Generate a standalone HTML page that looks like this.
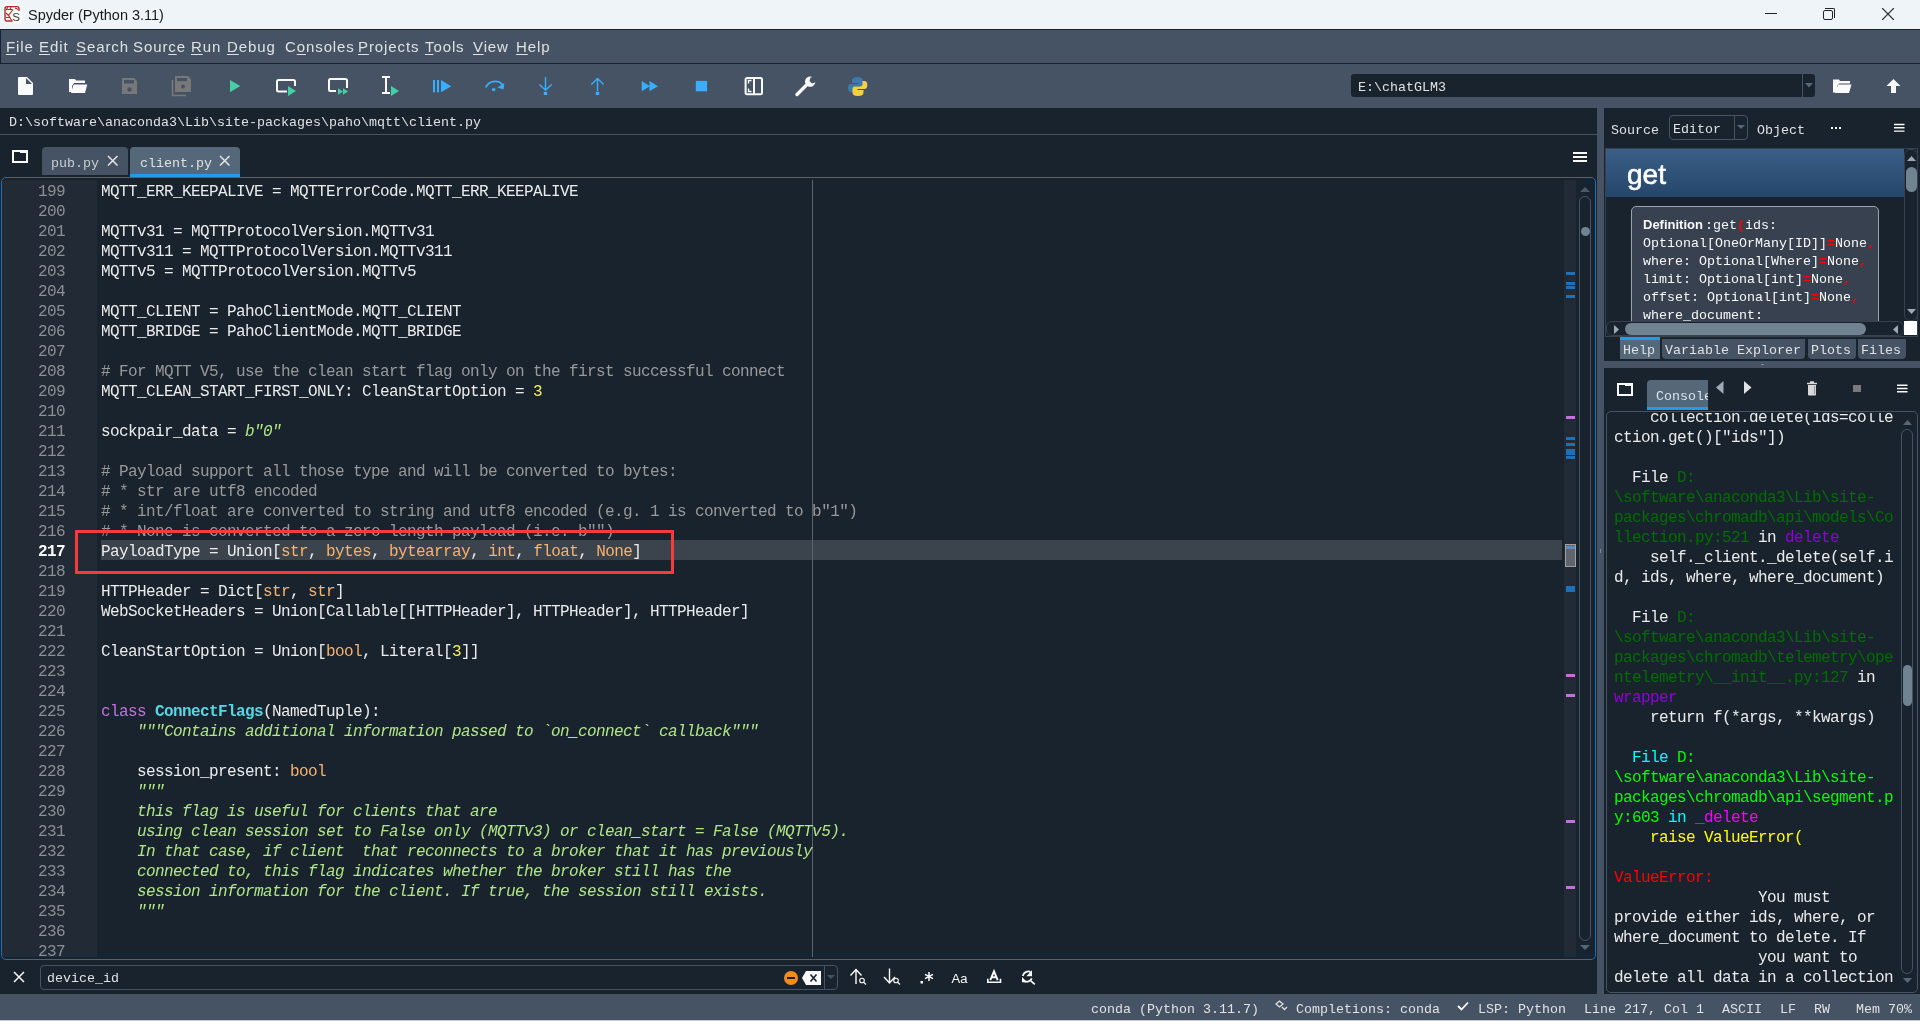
<!DOCTYPE html>
<html><head><meta charset="utf-8">
<style>
*{margin:0;padding:0;box-sizing:border-box}
html,body{width:1920px;height:1021px;overflow:hidden;background:#19232D;font-family:"Liberation Sans",sans-serif;position:relative}
.a{position:absolute}
.code,.mono,.mi,#title .t,.gt{will-change:transform}
#title{left:0;top:0;width:1920px;height:29px;background:#eff4f9}
#title .t{left:28px;top:7px;font-size:14.5px;color:#1a1a1a;white-space:nowrap}
#menubar{left:0;top:29px;width:1920px;height:35px;background:#455364;border-top:1px solid #19232D;border-bottom:1px solid #19232D;border-left:1px solid #19232D}
.mi{top:8px;font-size:15px;letter-spacing:0.9px;color:#E0E1E3;white-space:nowrap}
.mi u{text-decoration:underline;text-underline-offset:2px}
#toolbar{left:0;top:64px;width:1920px;height:44px;background:#455364}
.mono{font-family:"Liberation Mono",monospace}
.code{font-family:"Liberation Mono",monospace;font-size:16px;letter-spacing:-0.6px;line-height:20px;white-space:pre;color:#ebebeb}
.ln{color:#8a8f94}
.cm{color:#999999}
.kw{color:#c670e0}
.bi{color:#fab16c}
.df{color:#57d6e4;font-weight:bold}
.st{color:#b0e686;font-style:italic}
.nu{color:#faed5c}
.dg{color:#006e00}.dm{color:#9000e0}.bc{color:#00ffff}.bg{color:#00ff00}.bm{color:#ff00ff}.by{color:#ffff00}.br{color:#ff0000}
</style></head><body>
<!-- title bar -->
<div id="title" class="a">
  <svg class="a" style="left:2px;top:4px" width="20" height="20" viewBox="2 4 20 20">
    <rect x="2.5" y="4.2" width="19.2" height="19.3" rx="3" fill="#fbfbfb"/>
    <path d="M12.5 21H7Q5 21 5 19V8.5Q5 6.6 7 6.6H17Q19 6.6 19 8.5V11" stroke="#b52a2a" stroke-width="1.4" fill="none"/>
    <path d="M5.5 9.5L12.5 9.5M13 9.5L8.5 15.5L12 21M6 13L8.5 15.5M5.5 17.5L10.5 17.5M7.5 7L6.5 10M11 7L10 9.5M15 8L18.5 9.5" stroke="#b52a2a" stroke-width="1.1" fill="none"/>
    <text x="12.3" y="21" font-size="11.5" font-family="Liberation Sans" fill="#3a3a3a">S</text>
  </svg>
  <div class="a t">Spyder (Python 3.11)</div>
  <div class="a" style="left:1765px;top:13px;width:12px;height:1px;background:#222"></div>
  <div class="a" style="left:1823px;top:10px;width:10px;height:10px;border:1.2px solid #222;border-radius:2px"></div>
  <div class="a" style="left:1825px;top:8px;width:10px;height:10px;border-top:1.2px solid #222;border-right:1.2px solid #222;border-radius:0 2px 0 0"></div>
  <svg class="a" style="left:1882px;top:8px" width="12" height="12"><path d="M0 0L12 12M12 0L0 12" stroke="#222" stroke-width="1.2"/></svg>
</div>
<!-- menu bar -->
<div id="menubar" class="a">
  <div class="a mi" style="left:5px"><u>F</u>ile</div>
  <div class="a mi" style="left:37.5px"><u>E</u>dit</div>
  <div class="a mi" style="left:75px"><u>S</u>earch</div>
  <div class="a mi" style="left:132px">Sour<u>c</u>e</div>
  <div class="a mi" style="left:190px"><u>R</u>un</div>
  <div class="a mi" style="left:226px"><u>D</u>ebug</div>
  <div class="a mi" style="left:284px">C<u>o</u>nsoles</div>
  <div class="a mi" style="left:357px"><u>P</u>rojects</div>
  <div class="a mi" style="left:424px"><u>T</u>ools</div>
  <div class="a mi" style="left:472px"><u>V</u>iew</div>
  <div class="a mi" style="left:515px"><u>H</u>elp</div>
</div>
<!-- toolbar -->
<div id="toolbar" class="a"></div>
<svg class="a" style="left:0;top:64px" width="900" height="44" viewBox="0 64 900 44">
  <!-- new file -->
  <path d="M19 77 H27 L33 83 V94 Q33 95 32 95 H19 Q18 95 18 94 V78 Q18 77 19 77 Z" fill="#fafafa"/>
  <path d="M26 78 L26 84 L32 84 Z" fill="#455364"/>
  <!-- open folder -->
  <path d="M69 79 H75 L76 80.5 H85 V83 H74 L72 86 V92 H69 Z" fill="#fafafa"/>
  <path d="M71 93 L73.5 84.5 H87.3 L85 93 Z" fill="#fafafa"/>
  <!-- save (disabled) -->
  <path d="M122 78 H134 L137 81 V94 H122 Z" fill="#787878"/>
  <rect x="124" y="80" width="10" height="3.5" fill="#455364"/>
  <circle cx="129.5" cy="89.5" r="2.2" fill="#455364"/>
  <!-- save all (disabled) -->
  <path d="M175 76 H188 L191 79 V92 H175 Z" fill="#787878"/>
  <rect x="177" y="78" width="10" height="3.2" fill="#455364"/>
  <circle cx="183" cy="86.5" r="2" fill="#455364"/>
  <path d="M172.5 80 V95.5 H186" stroke="#787878" stroke-width="1.6" fill="none"/>
  <!-- run -->
  <path d="M230 80 L240.3 86 L230 92.3 Z" fill="#45d0a4"/>
  <!-- run cell -->
  <path d="M287 91.5 H278.5 Q277 91.5 277 90 V81.5 Q277 80 278.5 80 H293.5 Q295 80 295 81.5 V86" stroke="#fafafa" stroke-width="2" fill="none"/>
  <path d="M288 86 L296 91 L288 96 Z" fill="#45d0a4"/>
  <!-- run cell and advance -->
  <path d="M336 91 H330 Q329 91 329 89.5 V80.5 Q329 79 330.5 79 H345.5 Q347 79 347 80.5 V88" stroke="#fafafa" stroke-width="2" fill="none"/>
  <path d="M338 88.3 L343 91.5 L338 94.7 Z M343 88.3 L348 91.5 L343 94.7 Z" fill="#45d0a4"/>
  <!-- run selection -->
  <path d="M382 77 H390 M382 93 H390 M386 77 V93" stroke="#fafafa" stroke-width="2" fill="none"/>
  <path d="M391 86 L399 91 L391 96 Z" fill="#45d0a4"/>
  <!-- debug -->
  <rect x="433" y="80" width="2" height="12.3" fill="#37aefe"/>
  <rect x="437" y="80" width="2" height="12.3" fill="#37aefe"/>
  <path d="M441 80 L451.3 86.2 L441 92.3 Z" fill="#37aefe"/>
  <!-- step over -->
  <path d="M485.8 87.5 Q488 82 494.5 81.3 Q500.5 81 503 85.5" stroke="#37aefe" stroke-width="1.8" fill="none"/>
  <path d="M504.3 83 L503.5 89.5 L497.5 87.5 Z" fill="#37aefe"/>
  <rect x="492" y="88.3" width="3.3" height="2.6" fill="#37aefe"/>
  <!-- step into -->
  <path d="M545.5 77 V90 M539.3 84.5 L545.5 90 L551.7 84.5" stroke="#37aefe" stroke-width="1.4" fill="none"/>
  <rect x="543.8" y="91.8" width="3.4" height="3.2" fill="#37aefe"/>
  <!-- step return -->
  <path d="M597.5 78.5 V91 M591.3 84.5 L597.5 78.5 L603.7 84.5" stroke="#37aefe" stroke-width="1.4" fill="none"/>
  <rect x="595.8" y="91.8" width="3.4" height="3.2" fill="#37aefe"/>
  <!-- continue -->
  <path d="M641.7 81 L650 86.2 L641.7 91.3 Z M649.5 81 L658 86.2 L649.5 91.3 Z" fill="#37aefe"/>
  <!-- stop -->
  <rect x="695.8" y="80.9" width="11.3" height="10.4" fill="#37aefe"/>
  <!-- maximize -->
  <rect x="745.6" y="78" width="16.4" height="16.2" rx="1.5" stroke="#fafafa" stroke-width="2" fill="none"/>
  <path d="M754 78 V94" stroke="#fafafa" stroke-width="2"/>
  <path d="M751.5 80.5 H748.5 V83.5 M748.5 88.5 V91.5 H751.5" stroke="#fafafa" stroke-width="1.4" fill="none"/>
  <!-- wrench -->
  <path d="M797 94.5 L806 85.5" stroke="#fafafa" stroke-width="3.4" stroke-linecap="round"/>
  <path d="M812.5 77 A5.2 5.2 0 1 0 815.3 82.3 L812 83.5 L809.5 81 L810.5 77.6 Z" fill="#fafafa"/>
  <!-- python -->
  <path d="M857.5 77 Q852 77 852 80.5 V83 H858 V84 H851 Q848 84 848 88 Q848 92 851 92 H853 V89 Q853 86.5 856 86.5 H860.5 Q863 86.5 863 84 V80.5 Q863 77 857.5 77 Z" fill="#3f78aa"/>
  <path d="M858 96 Q863.5 96 863.5 92.5 V90 H857.5 V89 H864.5 Q867.3 89 867.3 85 Q867.3 81 864.5 81 H862.5 V84 Q862.5 86.5 859.5 86.5 H855 Q852.5 86.5 852.5 89 V92.5 Q852.5 96 858 96 Z" fill="#f5cf45"/>
</svg>
<!-- working dir combo -->
<div class="a" style="left:1351px;top:74px;width:464px;height:23px;background:#19232D;border-radius:3px"></div>
<div class="a" style="left:1802px;top:74px;width:1px;height:23px;background:#455364"></div>
<svg class="a" style="left:1805px;top:83px" width="8" height="5"><path d="M0 0H8L4 4.5Z" fill="#54687A"/></svg>
<div class="a mono" style="left:1358px;top:80px;font-size:13.33px;color:#E0E1E3;white-space:pre">E:\chatGLM3</div>
<svg class="a" style="left:1832px;top:78px" width="22" height="16" viewBox="1832 78 22 16">
  <path d="M1833 79.5H1839L1840 81H1850V83.5H1839L1837 86V92.5H1833Z" fill="#fafafa"/>
  <path d="M1835 93L1838 84.5H1851.5L1849 93Z" fill="#fafafa"/>
</svg>
<svg class="a" style="left:1885px;top:78px" width="17" height="16"><path d="M8.5 1L15.5 8H11V15H6V8H1.5Z" fill="#fafafa"/></svg>
<!-- editor pane -->
<div class="a mono" style="left:9px;top:115px;font-size:13.33px;color:#E0E1E3;white-space:pre">D:\software\anaconda3\Lib\site-packages\paho\mqtt\client.py</div>
<div class="a" style="left:0;top:134px;width:1597px;height:1px;background:#455364"></div>
<!-- browse tabs icon -->
<div class="a" style="left:12px;top:150px;width:16px;height:13px;border:2px solid #fafafa;border-top-width:2px"></div>
<div class="a" style="left:20px;top:150px;width:8px;height:3px;background:#fafafa"></div>
<div class="a" style="left:42px;top:147px;width:86px;height:28px;background:#455364;border-radius:4px 4px 0 0"></div>
<div class="a mono" style="left:51px;top:156px;font-size:13.33px;color:#C9CDD0;white-space:pre">pub.py</div>
<svg class="a" style="left:107px;top:155px" width="12" height="12"><path d="M1 1L10.5 10.5M10.5 1L1 10.5" stroke="#e0e1e3" stroke-width="1.6"/></svg>
<div class="a" style="left:130px;top:147px;width:110px;height:30px;background:#54687A;border-radius:4px 4px 0 0;border-bottom:3px solid #259AE9"></div>
<div class="a mono" style="left:140px;top:156px;font-size:13.33px;color:#E0E1E3;white-space:pre">client.py</div>
<svg class="a" style="left:219px;top:155px" width="12" height="12"><path d="M1 1L10.5 10.5M10.5 1L1 10.5" stroke="#e0e1e3" stroke-width="1.6"/></svg>
<!-- hamburger -->
<div class="a" style="left:1573px;top:152px;width:14px;height:2px;background:#fafafa;box-shadow:0 4px 0 #fafafa,0 8px 0 #fafafa"></div>
<!-- editor frame -->
<div class="a" style="left:1px;top:177px;width:1595px;height:783px;border:1px solid #1A72BB;border-radius:5px"></div>
<div class="a" style="left:2px;top:180px;width:95px;height:777px;background:#222B35"></div>
<div class="a" style="left:101px;top:540px;width:1461px;height:20px;background:#3b434c"></div>
<div class="a" style="left:812px;top:180px;width:1px;height:777px;background:#5b636b"></div>
<div class="a code ln" style="left:2px;top:182px;width:63px;text-align:right">199
200
201
202
203
204
205
206
207
208
209
210
211
212
213
214
215
216
<b style="color:#fff">217</b>
218
219
220
221
222
223
224
225
226
227
228
229
230
231
232
233
234
235
236
237</div>
<div class="a code" style="left:101px;top:182px"><span>MQTT_ERR_KEEPALIVE = MQTTErrorCode.MQTT_ERR_KEEPALIVE</span>

MQTTv31 = MQTTProtocolVersion.MQTTv31
MQTTv311 = MQTTProtocolVersion.MQTTv311
MQTTv5 = MQTTProtocolVersion.MQTTv5

MQTT_CLIENT = PahoClientMode.MQTT_CLIENT
MQTT_BRIDGE = PahoClientMode.MQTT_BRIDGE

<span class="cm"># For MQTT V5, use the clean start flag only on the first successful connect</span>
MQTT_CLEAN_START_FIRST_ONLY: CleanStartOption = <span class="nu">3</span>

sockpair_data = <span class="st">b&quot;0&quot;</span>

<span class="cm"># Payload support all those type and will be converted to bytes:</span>
<span class="cm"># * str are utf8 encoded</span>
<span class="cm"># * int/float are converted to string and utf8 encoded (e.g. 1 is converted to b"1")</span>
<span class="cm"># * None is converted to a zero length payload (i.e. b"")</span>
PayloadType = Union[<span class="bi">str</span>, <span class="bi">bytes</span>, <span class="bi">bytearray</span>, <span class="bi">int</span>, <span class="bi">float</span>, <span class="bi">None</span>]

HTTPHeader = Dict[<span class="bi">str</span>, <span class="bi">str</span>]
WebSocketHeaders = Union[Callable[[HTTPHeader], HTTPHeader], HTTPHeader]

CleanStartOption = Union[<span class="bi">bool</span>, Literal[<span class="nu">3</span>]]


<span class="kw">class</span> <span class="df">ConnectFlags</span>(NamedTuple):
    <span class="st">"""Contains additional information passed to `on_connect` callback"""</span>

    session_present: <span class="bi">bool</span>
    <span class="st">"""</span>
<span class="st">    this flag is useful for clients that are</span>
<span class="st">    using clean session set to False only (MQTTv3) or clean_start = False (MQTTv5).</span>
<span class="st">    In that case, if client  that reconnects to a broker that it has previously</span>
<span class="st">    connected to, this flag indicates whether the broker still has the</span>
<span class="st">    session information for the client. If true, the session still exists.</span>
<span class="st">    """</span>

</div>
<!-- red annotation -->
<div class="a" style="left:75px;top:530px;width:599px;height:44px;border:3px solid #f73b3b"></div>
<!-- flag area -->
<div class="a" style="left:1564px;top:180px;width:12px;height:777px;background:#222B35"></div>
<div class="a" style="left:1566px;top:272px;width:9px;height:3px;background:#1A72BB"></div>
<div class="a" style="left:1566px;top:282px;width:9px;height:3px;background:#1A72BB"></div>
<div class="a" style="left:1566px;top:286px;width:9px;height:3px;background:#1A72BB"></div>
<div class="a" style="left:1566px;top:295px;width:9px;height:3px;background:#1A72BB"></div>
<div class="a" style="left:1566px;top:416px;width:9px;height:3px;background:#c670e0"></div>
<div class="a" style="left:1566px;top:437px;width:9px;height:3px;background:#1A72BB"></div>
<div class="a" style="left:1566px;top:443px;width:9px;height:3px;background:#1A72BB"></div>
<div class="a" style="left:1566px;top:449px;width:9px;height:3px;background:#1A72BB"></div>
<div class="a" style="left:1566px;top:452px;width:9px;height:3px;background:#1A72BB"></div>
<div class="a" style="left:1566px;top:456px;width:9px;height:3px;background:#1A72BB"></div>
<div class="a" style="left:1566px;top:586px;width:9px;height:3px;background:#1A72BB"></div>
<div class="a" style="left:1566px;top:589px;width:9px;height:3px;background:#1A72BB"></div>
<div class="a" style="left:1566px;top:674px;width:9px;height:3px;background:#c670e0"></div>
<div class="a" style="left:1566px;top:694px;width:9px;height:3px;background:#c670e0"></div>
<div class="a" style="left:1566px;top:820px;width:9px;height:3px;background:#c670e0"></div>
<div class="a" style="left:1566px;top:886px;width:9px;height:3px;background:#c670e0"></div>
<div class="a" style="left:1565px;top:544px;width:11px;height:23px;border:1px solid #a0a0a0;background:#60656d"></div>
<div class="a" style="left:1566px;top:546px;width:9px;height:3px;background:#5b8ac0"></div>
<!-- scrollbar -->
<svg class="a" style="left:1579px;top:186px" width="12" height="7"><path d="M1 6L6 1L11 6Z" fill="#4b5a6b"/></svg>
<div class="a" style="left:1579px;top:196px;width:12px;height:745px;border:1px solid #455364;border-radius:6px"></div>
<div class="a" style="left:1580.5px;top:226.5px;width:9.5px;height:9.5px;border-radius:50%;background:#6f8391"></div>
<svg class="a" style="left:1579px;top:944px" width="12" height="7"><path d="M1 1L6 6L11 1Z" fill="#54687A"/></svg>

<!-- splitter -->
<div class="a" style="left:1597px;top:108px;width:7px;height:886px;background:#455364"></div>
<!-- help pane header -->
<div class="a mono" style="left:1611px;top:123px;font-size:13.33px;color:#E0E1E3;white-space:pre">Source</div>
<div class="a" style="left:1669px;top:115px;width:79px;height:25px;border:1px solid #455364;border-radius:4px"></div>
<div class="a" style="left:1734px;top:116px;width:1px;height:23px;background:#455364"></div>
<svg class="a" style="left:1737px;top:125px" width="8" height="5"><path d="M0 0H8L4 4Z" fill="#54687A"/></svg>
<div class="a mono" style="left:1673px;top:122px;font-size:13.33px;color:#E0E1E3;white-space:pre">Editor</div>
<div class="a mono" style="left:1757px;top:123px;font-size:13.33px;color:#E0E1E3;white-space:pre">Object</div>
<div class="a" style="left:1831px;top:127px;width:2px;height:2px;background:#fafafa;box-shadow:4px 0 0 #fafafa,8px 0 0 #fafafa"></div>
<svg class="a" style="left:1894px;top:122px" width="11" height="11"><path d="M0 2.5H10.5M0 5.8H10.5M0 9.1H10.5" stroke="#fafafa" stroke-width="1.4"/></svg>
<!-- help box -->
<div class="a" style="left:1605px;top:148px;width:313px;height:189px;border:1px solid #37414F;background:#19232D;overflow:hidden">
  <div class="a" style="left:0;top:0;width:298px;height:48px;background:linear-gradient(#3b5f87,#25466a)"></div>
  <div class="a gt" style="left:21px;top:9.5px;font-size:28px;color:#ffffff;font-weight:normal;-webkit-text-stroke:0.6px #fff">get</div>
  <div class="a" style="left:25px;top:57px;width:248px;height:130px;background:#37414F;border:1.5px solid #9aa4ad;border-radius:5px"></div>
  <div class="a code" style="left:37px;top:67px;font-size:13.33px;letter-spacing:0;line-height:18px;color:#fafafa"><b style="font-family:'Liberation Sans';font-size:13px;margin-right:2px">Definition</b>:get<span style="color:#ff0000;font-weight:bold">(</span>ids:
Optional[OneOrMany[ID]]<span style="color:#ff0000;font-weight:bold">=</span>None<span style="color:#ff0000;font-weight:bold">,</span>
where: Optional[Where]<span style="color:#ff0000;font-weight:bold">=</span>None<span style="color:#ff0000;font-weight:bold">,</span>
limit: Optional[int]<span style="color:#ff0000;font-weight:bold">=</span>None<span style="color:#ff0000;font-weight:bold">,</span>
offset: Optional[int]<span style="color:#ff0000;font-weight:bold">=</span>None<span style="color:#ff0000;font-weight:bold">,</span>
where_document:</div>
  <!-- vscroll -->
  <div class="a" style="left:298px;top:0;width:14px;height:173px;background:#19232D"></div>
  <div class="a" style="left:298px;top:0px;width:14px;height:172px;border:1px solid #37414F;border-radius:6px"></div>
  <svg class="a" style="left:301px;top:7px" width="9" height="5"><path d="M0 5L4.5 0L9 5Z" fill="#9DA9B5"/></svg>
  <div class="a" style="left:299.5px;top:18px;width:11.5px;height:25px;border-radius:6px;background:#6f8391"></div>
  <svg class="a" style="left:301px;top:160px" width="9" height="5"><path d="M0 0L4.5 5L9 0Z" fill="#9DA9B5"/></svg>
  <!-- hscroll -->
  <div class="a" style="left:0;top:172px;width:298px;height:15px;background:#19232D;border:1px solid #37414F;border-radius:6px"></div>
  <svg class="a" style="left:8px;top:176px" width="5" height="9"><path d="M0 0L5 4.5L0 9Z" fill="#9DA9B5"/></svg>
  <div class="a" style="left:19px;top:174px;width:241px;height:12px;border-radius:6px;background:#6f8391"></div>
  <svg class="a" style="left:287px;top:176px" width="5" height="9"><path d="M5 0L0 4.5L5 9Z" fill="#9DA9B5"/></svg>
  <div class="a" style="left:298px;top:172px;width:14px;height:14px;background:#ffffff"></div>
</div>
<!-- help bottom tabs -->
<div class="a" style="left:1620px;top:337px;width:40px;height:22px;background:#54687A;border-top:3px solid #259AE9"></div>
<div class="a" style="left:1662px;top:339px;width:143px;height:20px;background:#455364;border-radius:0 0 4px 4px"></div>
<div class="a" style="left:1808px;top:339px;width:48px;height:20px;background:#455364;border-radius:0 0 4px 4px"></div>
<div class="a" style="left:1858px;top:339px;width:48px;height:20px;background:#455364;border-radius:0 0 4px 4px"></div>
<div class="a mono" style="left:1623px;top:343px;font-size:13.33px;color:#E0E1E3;white-space:pre">Help</div>
<div class="a mono" style="left:1665px;top:343px;font-size:13.33px;color:#E0E1E3;white-space:pre">Variable Explorer</div>
<div class="a mono" style="left:1811px;top:343px;font-size:13.33px;color:#E0E1E3;white-space:pre">Plots</div>
<div class="a mono" style="left:1861px;top:343px;font-size:13.33px;color:#E0E1E3;white-space:pre">Files</div>
<!-- horizontal splitter -->
<div class="a" style="left:1604px;top:361px;width:316px;height:7px;background:#455364"></div>
<div class="a" style="left:1761px;top:364px;width:3px;height:1px;background:#7d8996"></div>
<div class="a" style="left:1600px;top:549px;width:1px;height:4px;background:#7d8996"></div>
<!-- console pane header -->
<div class="a" style="left:1617px;top:383px;width:16px;height:12.5px;border:2px solid #fafafa"></div>
<div class="a" style="left:1625px;top:383px;width:8px;height:3px;background:#fafafa"></div>
<div class="a" style="left:1647px;top:380px;width:61px;height:30px;background:#54687A;border-radius:4px 0 0 0;border-bottom:3px solid #259AE9;overflow:hidden">
  <div class="a mono" style="left:9px;top:9px;font-size:13.33px;color:#E0E1E3;white-space:pre">Console</div>
</div>
<svg class="a" style="left:1716px;top:381px" width="8" height="13"><path d="M7.5 0L0 6.5L7.5 13Z" fill="#9DA9B5"/></svg>
<svg class="a" style="left:1744px;top:381px" width="8" height="13"><path d="M0 0L7.5 6.5L0 13Z" fill="#e0e1e3"/></svg>
<svg class="a" style="left:1805px;top:381px" width="14" height="15"><path d="M2 2.5H12M5 1H9" stroke="#d8d8d8" stroke-width="1.6"/><path d="M3 4H11V13.5Q11 14.5 10 14.5H4Q3 14.5 3 13.5Z" fill="#d8d8d8"/><path d="M9.5 5V13" stroke="#9a9a9a" stroke-width="1.2"/></svg>
<div class="a" style="left:1852.5px;top:385px;width:8.5px;height:7px;background:#7a7a7a"></div>
<svg class="a" style="left:1897px;top:383px" width="11" height="11"><path d="M0 2.2H10.5M0 5.5H10.5M0 8.8H10.5" stroke="#fafafa" stroke-width="1.4"/></svg>
<!-- console frame -->
<div class="a" style="left:1606px;top:411px;width:312px;height:582px;border:1px solid #455364;border-radius:5px;overflow:hidden"><div class="a" style="left:0;top:1px;width:310px;height:580px;overflow:hidden">
  <div class="a code" style="left:7px;top:-5px;font-size:16px;letter-spacing:-0.6px;line-height:20px;color:#ebebeb">    collection.delete(ids=colle
ction.get()["ids"])

  File <span class="dg">D:</span>
<span class="dg">\software\anaconda3\Lib\site-</span>
<span class="dg">packages\chromadb\api\models\Co</span>
<span class="dg">llection.py:521</span> in <span class="dm">delete</span>
    self._client._delete(self.i
d, ids, where, where_document)

  File <span class="dg">D:</span>
<span class="dg">\software\anaconda3\Lib\site-</span>
<span class="dg">packages\chromadb\telemetry\ope</span>
<span class="dg">ntelemetry\__init__.py:127</span> in
<span class="dm">wrapper</span>
    return f(*args, **kwargs)

  <span class="bc">File</span> <span class="bg">D:</span>
<span class="bg">\software\anaconda3\Lib\site-</span>
<span class="bg">packages\chromadb\api\segment.p</span>
<span class="bg">y:603</span> <span class="bc">in</span> <span class="bm">_delete</span>
    <span class="by">raise ValueError(</span>

<span class="br">ValueError:</span>
                You must
provide either ids, where, or
where_document to delete. If
                you want to
delete all data in a collection</div></div>
  <div class="a" style="left:294px;top:17px;width:12px;height:545px;border:1px solid #455364;border-radius:6px"></div>
  <svg class="a" style="left:295.5px;top:8px" width="9" height="5"><path d="M0 5L4.5 0L9 5Z" fill="#54687A"/></svg>
  <div class="a" style="left:296px;top:253px;width:9px;height:41px;border-radius:5px;background:#6f8391"></div>
  <svg class="a" style="left:295.5px;top:566px" width="9" height="5"><path d="M0 0L4.5 5L9 0Z" fill="#54687A"/></svg>
</div>

<!-- find bar -->
<svg class="a" style="left:13px;top:971px" width="12" height="12"><path d="M1 1L11 11M11 1L1 11" stroke="#fafafa" stroke-width="1.5"/></svg>
<div class="a" style="left:40px;top:965px;width:798px;height:25px;border:1px solid #455364;border-radius:4px"></div>
<div class="a" style="left:824px;top:966px;width:1px;height:23px;background:#455364"></div>
<div class="a mono" style="left:47px;top:971px;font-size:13.33px;color:#E0E1E3;white-space:pre">device_id</div>
<div class="a" style="left:784px;top:970.5px;width:14px;height:14px;border-radius:50%;background:#f28c1c"></div>
<div class="a" style="left:787px;top:977px;width:8px;height:1.6px;background:#19232D"></div>
<svg class="a" style="left:802px;top:971px" width="19" height="14"><path d="M4 0H19V14H4L0 7Z" fill="#fafafa"/><path d="M8.5 3.5L14.5 10.5M14.5 3.5L8.5 10.5" stroke="#19232D" stroke-width="1.6"/></svg>
<svg class="a" style="left:827px;top:975px" width="8" height="4"><path d="M0 0H8L4 4Z" fill="#455364"/></svg>
<!-- search icons -->
<svg class="a" style="left:848px;top:966px;will-change:transform" width="200" height="22" viewBox="848 966 200 22">
  <path d="M856 970V984M850.5 975.5L856 969.5L861.5 975.5" stroke="#fafafa" stroke-width="1.4" fill="none"/>
  <circle cx="862" cy="980.5" r="2.3" stroke="#fafafa" stroke-width="1.1" fill="none"/><path d="M863.8 982.3L866 984.5" stroke="#fafafa" stroke-width="1.2"/>
  <path d="M889.5 968.5V982.5M884 977L889.5 983L895 977" stroke="#fafafa" stroke-width="1.4" fill="none"/>
  <circle cx="896" cy="980.5" r="2.3" stroke="#fafafa" stroke-width="1.1" fill="none"/><path d="M897.8 982.3L900 984.5" stroke="#fafafa" stroke-width="1.2"/>
  <rect x="920.5" y="981" width="2.5" height="2.5" fill="#fafafa"/>
  <path d="M929 972V981M925 974.3L933 978.7M933 974.3L925 978.7" stroke="#fafafa" stroke-width="1.5"/>
  <text x="951.5" y="982.8" font-family="Liberation Sans" font-size="13" fill="#fafafa">Aa</text>
  <path d="M990.3 980.2L994 971.3L997.7 980.2M991.8 977.2H996.2" stroke="#fafafa" stroke-width="1.9" fill="none"/>
  <path d="M987.8 978.8V982.3H1000.5V978.8" stroke="#fafafa" stroke-width="1.6" fill="none"/>
  <path d="M1022.8 976A5.8 5.8 0 0 1 1030.5 971.8" stroke="#fafafa" stroke-width="1.8" fill="none"/>
  <path d="M1032 970.3V976.2H1026.3Z" fill="#fafafa"/>
  <path d="M1022 977V982.3H1027.3Z" fill="#fafafa"/>
  <path d="M1024.2 981.2A5.8 5.8 0 0 0 1031.8 978.3" stroke="#fafafa" stroke-width="1.8" fill="none"/>
  <path d="M1030.8 980.8L1034.8 984.3" stroke="#fafafa" stroke-width="1.7"/>
</svg>
<!-- status bar -->
<div class="a" style="left:0;top:994px;width:1920px;height:26px;background:#455364"></div>
<div class="a" style="left:0;top:1020px;width:1920px;height:1px;background:#c8ccd0"></div>
<div class="a mono" style="left:1091px;top:1002px;font-size:13.33px;color:#E0E1E3;white-space:pre">conda (Python 3.11.7)</div>
<svg class="a" style="left:1274px;top:1000px" width="14" height="12"><path d="M2 4L5.5 1L9 4L5.5 7Z" stroke="#e0e1e3" stroke-width="1.3" fill="none"/><path d="M8 7L10.5 9.5L13 7" stroke="#e0e1e3" stroke-width="1.3" fill="none"/></svg>
<div class="a mono" style="left:1296px;top:1002px;font-size:13.33px;color:#E0E1E3;white-space:pre">Completions: conda</div>
<svg class="a" style="left:1457px;top:1001px" width="12" height="10"><path d="M1 5L4.5 8.5L11 1.5" stroke="#fafafa" stroke-width="1.8" fill="none"/></svg>
<div class="a mono" style="left:1478px;top:1002px;font-size:13.33px;color:#E0E1E3;white-space:pre">LSP: Python</div>
<div class="a mono" style="left:1584px;top:1002px;font-size:13.33px;color:#E0E1E3;white-space:pre">Line 217, Col 1</div>
<div class="a mono" style="left:1722px;top:1002px;font-size:13.33px;color:#E0E1E3;white-space:pre">ASCII</div>
<div class="a mono" style="left:1780px;top:1002px;font-size:13.33px;color:#E0E1E3;white-space:pre">LF</div>
<div class="a mono" style="left:1814px;top:1002px;font-size:13.33px;color:#E0E1E3;white-space:pre">RW</div>
<div class="a mono" style="left:1856px;top:1002px;font-size:13.33px;color:#E0E1E3;white-space:pre">Mem 70%</div>

</body></html>
